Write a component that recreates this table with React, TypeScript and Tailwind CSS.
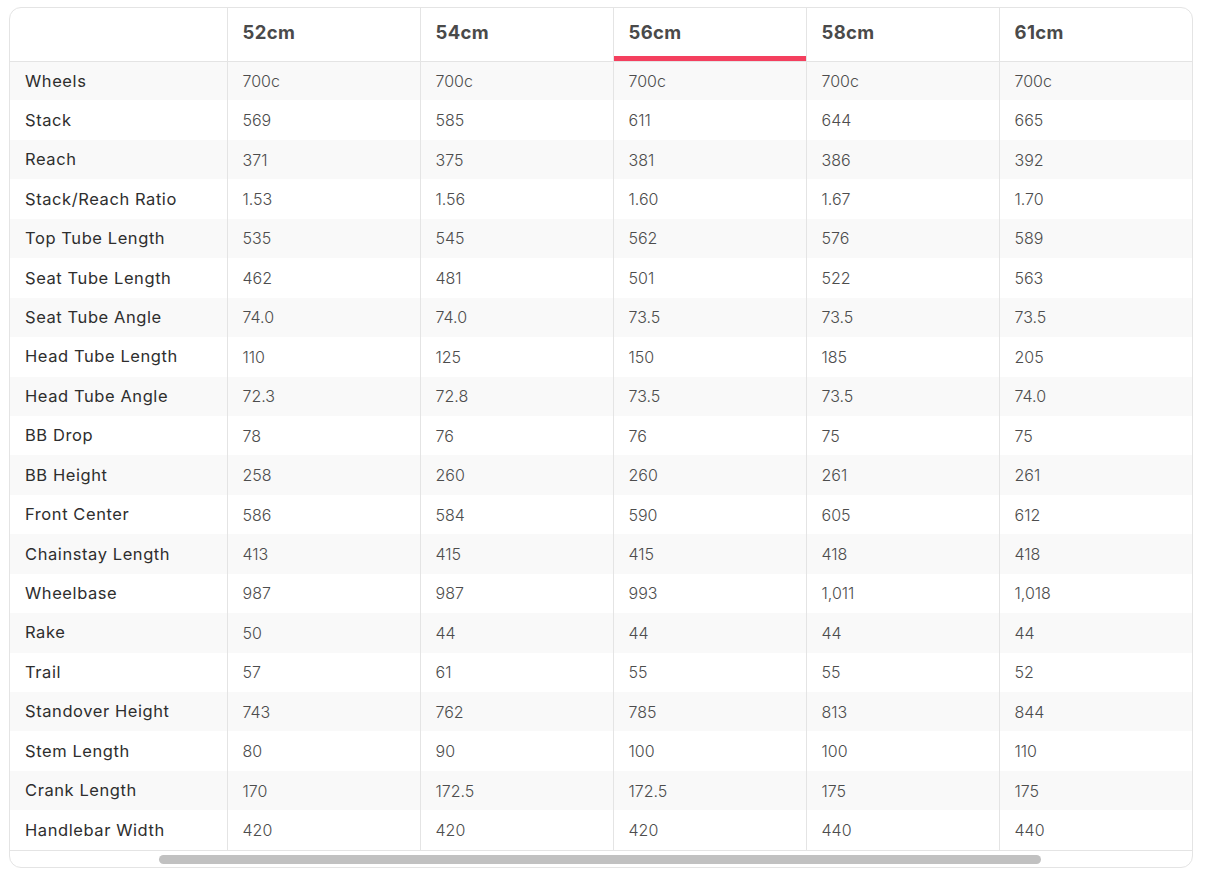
import React from 'react';

const sizes = ['52cm', '54cm', '56cm', '58cm', '61cm'];

const rows: [string, string[]][] = [
  ['Wheels', ['700c', '700c', '700c', '700c', '700c']],
  ['Stack', ['569', '585', '611', '644', '665']],
  ['Reach', ['371', '375', '381', '386', '392']],
  ['Stack/Reach Ratio', ['1.53', '1.56', '1.60', '1.67', '1.70']],
  ['Top Tube Length', ['535', '545', '562', '576', '589']],
  ['Seat Tube Length', ['462', '481', '501', '522', '563']],
  ['Seat Tube Angle', ['74.0', '74.0', '73.5', '73.5', '73.5']],
  ['Head Tube Length', ['110', '125', '150', '185', '205']],
  ['Head Tube Angle', ['72.3', '72.8', '73.5', '73.5', '74.0']],
  ['BB Drop', ['78', '76', '76', '75', '75']],
  ['BB Height', ['258', '260', '260', '261', '261']],
  ['Front Center', ['586', '584', '590', '605', '612']],
  ['Chainstay Length', ['413', '415', '415', '418', '418']],
  ['Wheelbase', ['987', '987', '993', '1,011', '1,018']],
  ['Rake', ['50', '44', '44', '44', '44']],
  ['Trail', ['57', '61', '55', '55', '52']],
  ['Standover Height', ['743', '762', '785', '813', '844']],
  ['Stem Length', ['80', '90', '100', '100', '110']],
  ['Crank Length', ['170', '172.5', '172.5', '175', '175']],
  ['Handlebar Width', ['420', '420', '420', '440', '440']],
];

const selected = 2;

export default function App() {
  return (
    <div className="min-h-[888px] bg-white pl-[9px] pr-[21px] pt-[7px] font-['Inter',sans-serif]">
      <div className="overflow-hidden rounded-xl border border-[#e4e4e4] bg-white">
        <table className="w-full table-fixed border-collapse">
          <colgroup>
            <col className="w-[217px]" />
            {sizes.map((s) => (
              <col key={s} />
            ))}
          </colgroup>
          <thead>
            <tr className="h-[53px] border-b border-[#e4e4e4]">
              <th />
              {sizes.map((s, i) => (
                <th
                  key={s}
                  className={`border-l border-[#e4e4e4] px-[15px] pb-[3px] text-left text-[18.5px] font-bold tracking-[0.02em] text-[#4a4a4a] ${
                    i === selected ? 'shadow-[inset_0_-5px_0_#f43f5e]' : ''
                  }`}
                >
                  {s}
                </th>
              ))}
            </tr>
          </thead>
          <tbody>
            {rows.map(([label, vals], r) => (
              <tr key={label} className={`h-[39.45px] ${r % 2 === 0 ? 'bg-[#f9f9f9]' : 'bg-white'}`}>
                <td className="px-[15px] text-[16.5px] tracking-[0.035em] text-[#2e2e2e]">{label}</td>
                {vals.map((v, i) => (
                  <td key={i} className="border-l border-[#e4e4e4] px-[15px] text-[16px] font-light text-[#4d4d4d]">
                    {v}
                  </td>
                ))}
              </tr>
            ))}
          </tbody>
        </table>
        {/* Scrollbar */}
        <div className="h-[17px] border-t border-[#e4e4e4] pl-[149px] pr-[151px] pt-[4px]">
          <div className="h-[9px] rounded-full bg-[#c1c1c1]" />
        </div>
      </div>
    </div>
  );
}
